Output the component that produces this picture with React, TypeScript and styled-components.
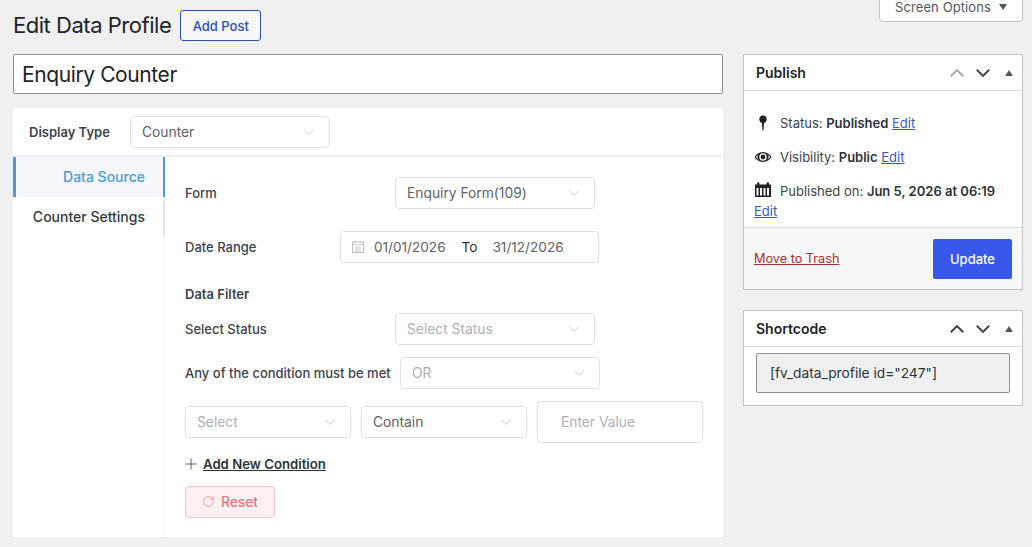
import React from "react"
import styled, { createGlobalStyle } from "styled-components"
import { ChevronDown, Plus, RotateCw } from "lucide-react"

const GlobalStyle = createGlobalStyle`
  html, body { margin: 0; padding: 0; }
  body {
    background: #f0f0f1;
    font-family: Inter, "Liberation Sans", sans-serif;
    color: #1d2327;
    overflow: hidden;
  }
  * { box-sizing: border-box; }
`

const Page = styled.div`
  position: relative;
  width: 1032px;
  height: 547px;
  overflow: hidden;
  display: flex;
  gap: 20px;
  padding: 0 9px 0 13px;
`
const ScreenOptions = styled.button`
  position: absolute;
  top: -1px;
  right: 9px;
  width: 144px;
  height: 23px;
  display: flex;
  align-items: center;
  justify-content: center;
  gap: 8px;
  padding: 0 0 7px;
  background: #fff;
  border: 1px solid #c3c4c7;
  border-radius: 0 0 4px 4px;
  font: 13px Inter, sans-serif;
  letter-spacing: .1px;
  color: #50575e;
`
const DownTri = styled.span`
  width: 0;
  height: 0;
  border-left: 4px solid transparent;
  border-right: 4px solid transparent;
  border-top: 6px solid #50575e;
`
const Main = styled.div`
  width: 710px;
  display: flex;
  flex-direction: column;
`
const Heading = styled.div`
  height: 54px;
  padding-top: 10px;
  display: flex;
  align-items: flex-start;
  gap: 9px;
`
const Title = styled.h1`
  margin: 0;
  font-size: 22px;
  line-height: 31px;
  font-weight: 400;
  letter-spacing: -.47px;
  color: #1d2327;
`
const AddPost = styled.button`
  width: 81px;
  height: 31px;
  background: #f6f7f7;
  border: 1px solid #2c4fb6;
  border-radius: 3px;
  color: #2c4fb6;
  font: 500 13px Inter, sans-serif;
`
const TitleInput = styled.div`
  height: 40px;
  padding: 0 8px;
  display: flex;
  align-items: center;
  background: #fff;
  border: 1px solid #8c8f94;
  border-radius: 2px;
  font-size: 21px;
  letter-spacing: -.4px;
  color: #1d2327;
`
const Card = styled.div`
  margin-top: 14px;
  height: 429px;
  background: #fff;
  display: flex;
  flex-direction: column;
`
const TypeRow = styled.div`
  height: 49px;
  flex: none;
  padding: 8px 0 0 16px;
  display: flex;
  align-items: flex-start;
  border-bottom: 2px solid #f0f0f1;
`
const TypeLabel = styled.span`
  width: 101px;
  line-height: 32px;
  font-size: 13px;
  font-weight: 600;
  color: #3c434a;
`
const Body = styled.div`
  flex: 1;
  display: flex;
`
const Tabs = styled.div`
  width: 152px;
  flex: none;
  border-right: 1px solid #f6f6f7;
`
const Tab = styled.div<{ $active?: boolean }>`
  height: 40px;
  margin-right: -1px;
  padding: 0 18px 1px 0;
  display: flex;
  align-items: center;
  justify-content: flex-end;
  font-size: 14px;
  font-weight: 500;
  color: ${p => (p.$active ? "#4a9bdc" : "#33383d")};
  background: ${p => (p.$active ? "#f5f7fa" : "#fff")};
  border-right: 2px solid ${p => (p.$active ? "#4a9bdc" : "#e8e8ea")};
  ${p => p.$active && `border-left: 3px solid #4a9bdc;`}
`
const Content = styled.div`
  flex: 1;
  padding: 20px 20px 0;
  display: flex;
  flex-direction: column;
`
const Row = styled.div<{ $mb: number }>`
  display: flex;
  align-items: center;
  margin-bottom: ${p => p.$mb}px;
`
const Label = styled.span<{ $w: number }>`
  width: ${p => p.$w}px;
  flex: none;
  font-size: 13px;
  font-weight: 500;
  color: #3c434a;
`
const FilterTitle = styled.div`
  height: 18px;
  margin-bottom: 10px;
  line-height: 18px;
  font-size: 13px;
  font-weight: 600;
  color: #3c434a;
`
const Select = styled.div<{ $w: number; $muted?: boolean }>`
  width: ${p => p.$w}px;
  height: 32px;
  flex: none;
  padding: 0 11px 1px 11px;
  display: flex;
  align-items: center;
  justify-content: space-between;
  background: #fff;
  border: 1px solid #e0e1e4;
  border-radius: 4px;
  font-size: 13.8px;
  color: ${p => (p.$muted ? "#aeb0b5" : "#606266")};
  svg { color: #b9bbc0; }
`
const DateBox = styled.div`
  width: 259px;
  height: 32px;
  flex: none;
  padding: 0 0 1px 10px;
  display: flex;
  align-items: center;
  background: #fff;
  border: 1px solid #e0e1e4;
  border-radius: 4px;
  font-size: 13.6px;
  color: #606266;
`
const DateValue = styled.span<{ $ml: number }>`
  margin-left: ${p => p.$ml}px;
`
const DateTo = styled.span`
  margin-left: 16px;
  color: #303133;
`
const ConditionRow = styled.div`
  display: flex;
  align-items: center;
  gap: 10px;
  margin-bottom: 11px;
`
const ValueInput = styled.div`
  width: 166px;
  height: 42px;
  padding: 0 0 1px 23px;
  display: flex;
  align-items: center;
  border: 1px solid #e0e1e4;
  border-radius: 4px;
  font-size: 13.8px;
  color: #aeb0b5;
`
const AddCondition = styled.div`
  display: flex;
  align-items: center;
  gap: 3px;
  height: 20px;
  margin-bottom: 12px;
  font-size: 13.2px;
  font-weight: 600;
  color: #2c3338;
  span { text-decoration: underline; }
  svg { margin-left: -3px; }
`
const ResetButton = styled.button`
  width: 90px;
  height: 32px;
  padding: 0 0 1px;
  display: flex;
  align-items: center;
  justify-content: center;
  gap: 6px;
  background: #fef0f0;
  border: 1px solid #fbc4c4;
  border-radius: 4px;
  color: #e4767d;
  font: 500 13.8px Inter, sans-serif;
`
const Side = styled.div`
  width: 280px;
  padding-top: 54px;
  display: flex;
  flex-direction: column;
  gap: 20px;
`
const Box = styled.div`
  background: #fff;
  border: 1px solid #c3c4c7;
`
const BoxHead = styled.div`
  height: 36px;
  padding: 0 9px 0 12px;
  display: flex;
  align-items: center;
  justify-content: space-between;
  border-bottom: 1px solid #dcdcde;
  font-size: 14px;
  font-weight: 600;
  color: #1d2327;
`
const BoxTools = styled.div`
  display: flex;
  align-items: center;
  gap: 12px;
`
const Tool = styled.svg<{ $dim?: boolean }>`
  width: 14px;
  height: 10px;
  fill: none;
  stroke: ${p => (p.$dim ? "#a7aaad" : "#3c434a")};
  stroke-width: 2;
`
const UpTri = styled.span`
  width: 0;
  height: 0;
  margin-left: 3px;
  border-left: 4px solid transparent;
  border-right: 4px solid transparent;
  border-bottom: 6px solid #50575e;
`
const Misc = styled.div`
  height: 136px;
  padding: 22px 10px 0;
  font-size: 13px;
  color: #3c434a;
`
const MiscRow = styled.div`
  display: flex;
  align-items: center;
  height: 20px;
  margin-bottom: 14px;
  strong { font-weight: 600; color: #2c3338; }
`
const MiscIcon = styled.svg`
  width: 18px;
  height: 18px;
  flex: none;
  margin-right: 8px;
  fill: #1d2327;
`
const EditLink = styled.a`
  color: #3858c9;
  text-decoration: underline;
  font-size: 13px;
`
const EditBlock = styled(EditLink)`
  display: block;
  line-height: 20px;
`
const PublishedRow = styled(MiscRow)`
  margin-bottom: 0;
`
const Actions = styled.div`
  height: 62px;
  padding: 0 10px;
  display: flex;
  align-items: center;
  justify-content: space-between;
  background: #f6f7f7;
  border-top: 1px solid #dcdcde;
`
const TrashLink = styled.a`
  font-size: 12.7px;
  color: #b32d2e;
  text-decoration: underline;
`
const UpdateButton = styled.button`
  width: 79px;
  height: 40px;
  background: #3858e9;
  border: none;
  border-radius: 2px;
  color: #fff;
  font: 500 13px Inter, sans-serif;
`
const ShortBody = styled.div`
  padding: 6px 12px 12px;
`
const ShortInput = styled.div`
  height: 40px;
  padding: 0 13px;
  display: flex;
  align-items: center;
  background: #f0f0f1;
  border: 1px solid #8c8f94;
  border-radius: 2px;
  font-size: 13.75px;
  color: #2c3338;
`

const MetaTools = ({ dimUp }: { dimUp?: boolean }) => (
  <BoxTools>
    <Tool $dim={dimUp} viewBox="0 0 14 10"><path d="M.8 8.300 7 2.100l6.200 6.200" /></Tool>
    <Tool viewBox="0 0 14 10"><path d="M.8 1.700 7 7.900l6.200-6.200" /></Tool>
    <UpTri />
  </BoxTools>
)

const Chevron = () => <ChevronDown size={18} strokeWidth={1} />

export default function App() {
  return (
    <Page>
      <GlobalStyle />
      <ScreenOptions>Screen Options <DownTri /></ScreenOptions>
      <Main>
        <Heading>
          <Title>Edit Data Profile</Title>
          <AddPost>Add Post</AddPost>
        </Heading>
        <TitleInput>Enquiry Counter</TitleInput>
        <Card>
          <TypeRow>
            <TypeLabel>Display Type</TypeLabel>
            <Select $w={200}>Counter <Chevron /></Select>
          </TypeRow>
          <Body>
            <Tabs>
              <Tab $active>Data Source</Tab>
              <Tab>Counter Settings</Tab>
            </Tabs>
            <Content>
              <Row $mb={22}>
                <Label $w={210}>Form</Label>
                <Select $w={200}>Enquiry Form(109) <Chevron /></Select>
              </Row>
              <Row $mb={22}>
                <Label $w={155}>Date Range</Label>
                <DateBox>
                  <svg width="14" height="14" viewBox="0 0 14 14" fill="none" stroke="#b9bbc0">
                    <rect x="1.500" y="2" width="11" height="10.500" />
                    <path d="M1.500 4.500h11M4 1v2M10 1v2M4 7h6M4 9h6M4 11h6" strokeWidth=".8" />
                  </svg>
                  <DateValue $ml={9}>01/01/2026</DateValue>
                  <DateTo>To</DateTo>
                  <DateValue $ml={15}>31/12/2026</DateValue>
                </DateBox>
              </Row>
              <FilterTitle>Data Filter</FilterTitle>
              <Row $mb={12}>
                <Label $w={210}>Select Status</Label>
                <Select $w={200} $muted>Select Status <Chevron /></Select>
              </Row>
              <Row $mb={12}>
                <Label $w={215}>Any of the condition must be met</Label>
                <Select $w={200} $muted>OR <Chevron /></Select>
              </Row>
              <ConditionRow>
                <Select $w={166} $muted>Select <Chevron /></Select>
                <Select $w={166}>Contain <Chevron /></Select>
                <ValueInput>Enter Value</ValueInput>
              </ConditionRow>
              <AddCondition>
                <Plus size={18} strokeWidth={1} />
                <span>Add New Condition</span>
              </AddCondition>
              <ResetButton>
                <RotateCw size={13} strokeWidth={1.2} />
                Reset
              </ResetButton>
            </Content>
          </Body>
        </Card>
      </Main>
      <Side>
        <Box>
          <BoxHead>Publish <MetaTools dimUp /></BoxHead>
          <Misc>
            <MiscRow>
              <MiscIcon viewBox="0 0 18 18">
                <path d="M9 1.500a3.800 3.800 0 0 1 1.100 7.400L9.500 16.500h-1L7.900 8.900A3.800 3.800 0 0 1 9 1.500z" />
              </MiscIcon>
              <span>Status: <strong>Published</strong> <EditLink>Edit</EditLink></span>
            </MiscRow>
            <MiscRow>
              <MiscIcon viewBox="0 0 18 18">
                <path fillRule="evenodd" d="M9 4c3.800 0 6.800 2.400 8.500 5-1.700 2.600-4.700 5-8.500 5S2.200 11.600.5 9C2.200 6.400 5.200 4 9 4zm0 1.300A3.700 3.700 0 1 0 9 12.700 3.700 3.700 0 0 0 9 5.300zM3.800 6.600A10 10 0 0 0 1.900 9a10 10 0 0 0 2.900 2.900A5 5 0 0 1 3.800 6.600zm10.400 0a5 5 0 0 1-1 5.300A10 10 0 0 0 16.100 9a10 10 0 0 0-1.900-2.400z" />
                <circle cx="9" cy="9" r="2.400" />
              </MiscIcon>
              <span>Visibility: <strong>Public</strong> <EditLink>Edit</EditLink></span>
            </MiscRow>
            <PublishedRow>
              <MiscIcon viewBox="0 0 18 18">
                <path fillRule="evenodd" d="M1 2.500h2v-1a1.200 1.200 0 0 1 2.400 0v1h7.200v-1a1.200 1.200 0 0 1 2.400 0v1h2V15H1zM2.500 6v7.500h2V6zm3.500 0v7.500h2V6zm3.500 0v7.500h2V6zm3.500 0v7.500h2V6z" />
              </MiscIcon>
              <span>Published on: <strong>Jun 5, 2026 at 06:19</strong></span>
            </PublishedRow>
            <EditBlock>Edit</EditBlock>
          </Misc>
          <Actions>
            <TrashLink>Move to Trash</TrashLink>
            <UpdateButton>Update</UpdateButton>
          </Actions>
        </Box>
        <Box>
          <BoxHead>Shortcode <MetaTools /></BoxHead>
          <ShortBody>
            <ShortInput>[fv_data_profile id="247"]</ShortInput>
          </ShortBody>
        </Box>
      </Side>
    </Page>
  )
}
